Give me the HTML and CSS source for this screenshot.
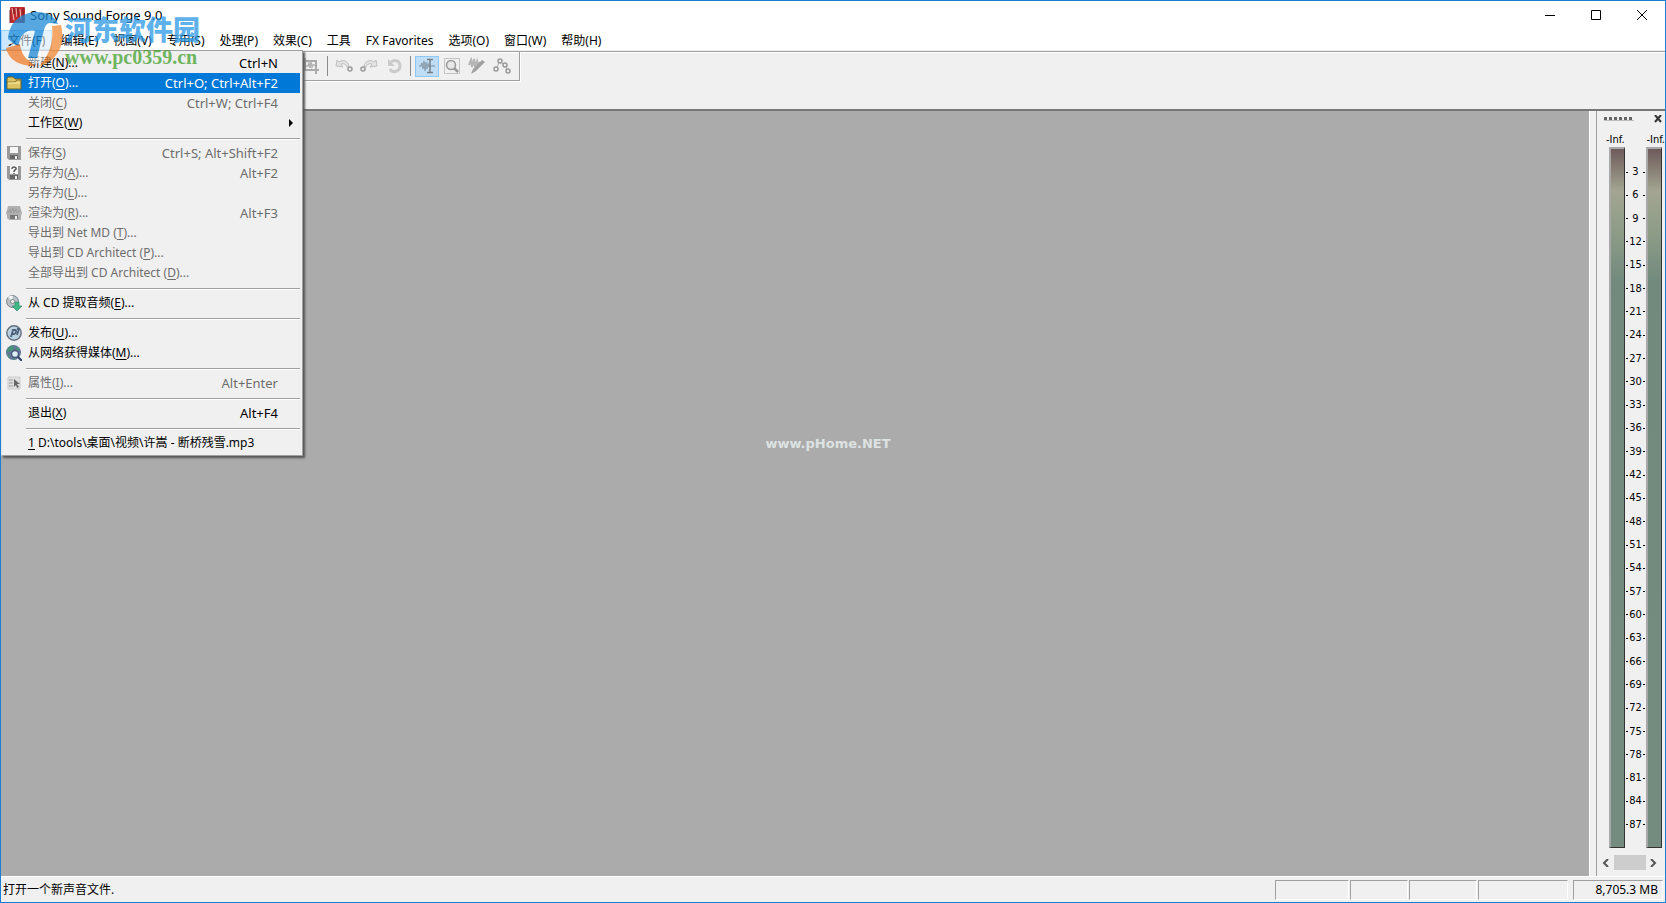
FILE: index.html
```html
<!DOCTYPE html>
<html lang="zh-CN">
<head>
<meta charset="utf-8">
<title>Sony Sound Forge 9.0</title>
<link rel="stylesheet" href="styles.css">
</head>
<body>
<div class="window">
  <header class="titlebar">
    <svg class="app-icon" viewBox="0 0 16 16" aria-hidden="true"><rect x="1" width="15" height="16" rx="1" fill="#c22d30"/><path d="M3 1l2 12M7 1l1 9M11 2l1 10" fill="none" stroke="#f0b9b4"/><path d="M1 3v13M5 1v6M9 1v9M14 1v14" stroke="#761c22"/></svg>
    <h1 class="title">Sony Sound Forge 9.0</h1>
    <div class="caption-buttons">
      <button aria-label="最小化"><svg viewBox="0 0 12 12"><path d="M1 6.500h10"/></svg></button>
      <button aria-label="最大化"><svg viewBox="0 0 12 12"><path d="M1.500 1.500h9v9h-9z"/></svg></button>
      <button aria-label="关闭"><svg viewBox="0 0 12 12"><path d="M1 1l10 10M11 1L1 11"/></svg></button>
    </div>
  </header>
  <nav class="menubar" aria-label="主菜单">
    <button class="open">文件(F)</button><button>编辑(E)</button><button>视图(V)</button><button>专用(S)</button><button>处理(P)</button><button>效果(C)</button><button>工具</button><button>FX Favorites</button><button>选项(O)</button><button>窗口(W)</button><button>帮助(H)</button>
  </nav>
  <section class="toolbars">
    <div class="toolbar">
      <button aria-label="裁剪"><svg viewBox="0 0 18 18"><path d="M0 4h14v13M3 1v12h14" fill="none" stroke="#aaa" stroke-width="2"/><path d="M4 9h2l1-3 1 5 1-6 1 5 1-2h2" fill="none" stroke="#b4b4b4" stroke-width="1.500"/></svg></button>
      <span class="divider"></span>
      <button aria-label="撤销"><svg viewBox="0 0 18 18"><path d="M1 9l1-6 2 2c4-3 9-1 10 4l-2 1c-1-3-4-4-6-3l2 3z" fill="#e2e2e2" stroke="#c0c0c0"/><circle cx="15" cy="12" r="2" fill="none" stroke="#999" stroke-width="1.500"/></svg></button>
      <button aria-label="重做"><svg viewBox="0 0 18 18"><path d="M17 9l-1-6-2 2C10 2 5 4 4 9l2 1c1-3 4-4 6-3l-2 3z" fill="#e2e2e2" stroke="#c0c0c0"/><circle cx="3" cy="12" r="2" fill="none" stroke="#999" stroke-width="1.500"/></svg></button>
      <button aria-label="重复"><svg viewBox="0 0 18 18"><path d="M6 5c4-3 9-1 9 4s-7 8-10 3" fill="none" stroke="#cacaca" stroke-width="3"/><path d="M3 2v7h7z" fill="#cacaca"/></svg></button>
      <span class="divider"></span>
      <button class="active" aria-label="编辑工具"><svg viewBox="0 0 18 18"><path d="M1 9h2l1-3 1 6 1-8 1 10 1-9 1 7 1-5 1 2h6" fill="none" stroke="#90a5b6" stroke-width="1.500"/><path d="M9 2.500h2.500L12 3l.5-.5H15M12 3v12M9 15.500h2.500L12 15l.5.5H15" fill="none" stroke="#777f87" stroke-width="1.500"/></svg></button>
      <button aria-label="放大工具"><svg viewBox="0 0 18 18"><path d="M1.500 1.500h15v15h-15z" fill="none" stroke="#999" stroke-dasharray="1 1"/><circle cx="8" cy="8" r="4.500" fill="#e8e8e8" stroke="#999" stroke-width="1.500"/><path d="M11 11l4 4" stroke="#999" stroke-width="2.500"/></svg></button>
      <button aria-label="铅笔工具"><svg viewBox="0 0 18 18"><path d="M1 8l2-5 1 7 2-8 1 8 2-6 1 4 2-3" fill="none" stroke="#b5b5b5" stroke-width="2"/><path d="M14 3l3 2-9 9-5 3 2-5z" fill="#a0a0a0"/></svg></button>
      <button aria-label="包络工具"><svg viewBox="0 0 18 18"><path d="M3 12l4-8 5 5 4 6" fill="none" stroke="#aaa"/><g fill="#eee" stroke="#999" stroke-width="1.500"><circle cx="3" cy="12" r="2"/><circle cx="7" cy="4" r="2"/><circle cx="12" cy="8" r="2"/><circle cx="15" cy="14" r="2"/></g></svg></button>
    </div>
  </section>
  <main class="content">
    <section class="workspace"><span class="site-mark">www.pHome.NET</span></section>
    <aside class="meters">
      <div class="grip-row"><span class="grip"></span><button aria-label="关闭电平表"><svg viewBox="0 0 8 8"><path d="M1 0l6 7M7 0L1 7"/></svg></button></div>
      <div class="peaks"><span>-Inf.</span><span>-Inf.</span></div>
      <div class="meter-body">
        <div class="bar"></div>
        <ol class="scale"><li>3</li><li>6</li><li>9</li><li>12</li><li>15</li><li>18</li><li>21</li><li>24</li><li>27</li><li>30</li><li>33</li><li>36</li><li>39</li><li>42</li><li>45</li><li>48</li><li>51</li><li>54</li><li>57</li><li>60</li><li>63</li><li>66</li><li>69</li><li>72</li><li>75</li><li>78</li><li>81</li><li>84</li><li>87</li></ol>
        <div class="bar"></div>
      </div>
      <div class="scroller"><button aria-label="向左"><svg viewBox="0 0 8 8"><path d="M6 0L2 4l4 4"/></svg></button><span class="thumb"></span><button aria-label="向右"><svg viewBox="0 0 8 8"><path d="M2 0l4 4-4 4"/></svg></button></div>
    </aside>
  </main>
  <footer class="statusbar"><span class="message">打开一个新声音文件.</span><span class="pane pane-a"></span><span class="pane pane-b"></span><span class="pane pane-c"></span><span class="pane pane-d"></span><span class="pane memory">8,705.3 MB</span></footer>

  <div class="file-menu" role="menu">
    <button role="menuitem"><i></i><span>新建(<u>N</u>)...</span><kbd>Ctrl+N</kbd></button>
    <button role="menuitem" class="selected"><i><svg viewBox="0 0 16 16"><path d="M1 14V4l1-2h5l2 2h6v10z" fill="#dcc465" stroke="#796625"/><path d="M1 7h8l2-2h4" fill="none" stroke="#8b752e"/><path d="M2 8h12" stroke="#fff0a4"/></svg></i><span>打开(<u>O</u>)...</span><kbd>Ctrl+O; Ctrl+Alt+F2</kbd></button>
    <button role="menuitem" disabled><i></i><span>关闭(<u>C</u>)</span><kbd>Ctrl+W; Ctrl+F4</kbd></button>
    <button role="menuitem"><i></i><span>工作区(<u>W</u>)</span><svg class="arrow" viewBox="0 0 4 8"><path d="M0 0l4 4-4 4z"/></svg></button>
    <hr>
    <button role="menuitem" disabled><i><svg viewBox="0 0 16 16"><path d="M1 1h14v14H3l-2-2z" fill="#999"/><path d="M4 2h8v6H4z" fill="#f5f5f5"/><path d="M4 10h8v4H4z" fill="#666"/><path d="M9 11h2v3H9z" fill="#eee"/></svg></i><span>保存(<u>S</u>)</span><kbd>Ctrl+S; Alt+Shift+F2</kbd></button>
    <button role="menuitem" disabled><i><svg viewBox="0 0 16 16"><path d="M1 1h14v14H3l-2-2z" fill="#999"/><path d="M4 1h8v8H4z" fill="#f5f5f5"/><path d="M6 4c0-3 5-2 4 0L8 6v1M8 8v1" fill="none" stroke="#555" stroke-width="1.500"/><path d="M4 10h8v4H4z" fill="#666"/><path d="M9 11h2v3H9z" fill="#eee"/></svg></i><span>另存为(<u>A</u>)...</span><kbd>Alt+F2</kbd></button>
    <button role="menuitem" disabled><i></i><span>另存为(<u>L</u>)...</span></button>
    <button role="menuitem" disabled><i><svg viewBox="0 0 16 16"><path d="M2 1h12l1 4 1 3-1 3v4H3l-2-2v-3L0 8l1-3z" fill="#b0b0b0"/><path d="M1 7h2l1-3 1 4 2-5 1 5 2-4 1 4 2-2h2" fill="none" stroke="#9c9c9c"/><path d="M4 10h8v4H4z" fill="#777"/><path d="M9 11h2v3H9z" fill="#eee"/></svg></i><span>渲染为(<u>R</u>)...</span><kbd>Alt+F3</kbd></button>
    <button role="menuitem" disabled><i></i><span>导出到 Net MD (<u>T</u>)...</span></button>
    <button role="menuitem" disabled><i></i><span>导出到 CD Architect (<u>P</u>)...</span></button>
    <button role="menuitem" disabled><i></i><span>全部导出到 CD Architect (<u>D</u>)...</span></button>
    <hr>
    <button role="menuitem"><i><svg viewBox="0 0 16 16"><circle cx="6.500" cy="6.500" r="6" fill="#b9c0c5" stroke="#7c848c"/><path d="M6 6L2 2a6 6 0 015-1z" fill="#f2f5f6"/><circle cx="6.500" cy="6.500" r="2" fill="#fff" stroke="#888"/><path d="M9 7h4v4h3l-5 5-5-5h3z" fill="#3fb885" stroke="#298764" stroke-width=".6"/></svg></i><span>从 CD 提取音频(<u>E</u>)...</span></button>
    <hr>
    <button role="menuitem"><i><svg viewBox="0 0 16 16"><circle cx="8" cy="8" r="7.200" fill="#bad2e1" stroke="#64707c" stroke-width="1.400"/><path d="M5 12L7 5h2c2 0 1 4-1 4H6M11 4h2l-2 6" fill="none" stroke="#4c617a" stroke-width="1.800"/></svg></i><span>发布(<u>U</u>)...</span></button>
    <button role="menuitem"><i><svg viewBox="0 0 16 16"><circle cx="7.500" cy="7.500" r="7.500" fill="#66749f"/><path d="M3 2l4-2 1 4-4 3-4-1zM10 1l4 4-3 1zM0 8l4 2v4zM6 14l4-1-1 2z" fill="#459577"/><circle cx="9" cy="9" r="3.500" fill="#dfedf7" stroke="#4b5878" stroke-width="1.500"/><path d="M12 12l4 4" stroke="#293c62" stroke-width="2"/></svg></i><span>从网络获得媒体(<u>M</u>)...</span></button>
    <hr>
    <button role="menuitem" disabled><i><svg viewBox="0 0 16 16"><path d="M2 2h12v12H2z" fill="#e0e0e0" stroke="#ccc"/><path d="M3 5h4M3 8h4M3 11h4" stroke="#999"/><path d="M8 4v8l2-2 1 3 2-1-2-3h3z" fill="#666"/></svg></i><span>属性(<u>I</u>)...</span><kbd>Alt+Enter</kbd></button>
    <hr>
    <button role="menuitem"><i></i><span>退出(<u>X</u>)</span><kbd>Alt+F4</kbd></button>
    <hr>
    <button role="menuitem"><i></i><span><u>1</u> D:\tools\桌面\视频\许嵩 - 断桥残雪.mp3</span></button>
  </div>

  <div class="watermark">
    <svg viewBox="0 0 60 60" aria-hidden="true"><circle cx="29" cy="34" r="22" fill="#fff" fill-opacity=".7"/><path d="M4 31C5 12 20 4 33 4c10 0 18 4 21 12l-8-1c-3 0-5 3-6 7l-7 28h-9l7-27c-8-2-13 3-15 9l-2 7z" fill="#1f8bd8"/><path d="M2 40l14-4c1 7 3 12 8 16l7 6C17 58 5 53 2 40z" fill="#f07c28"/><path d="M48 18l9-1c5 20-4 36-22 41 9-8 15-23 13-40z" fill="#f28a35"/></svg>
    <div class="watermark-text"><strong>河东软件园</strong><span>www.pc0359.cn</span></div>
  </div>
</div>
</body>
</html>
```
FILE: styles.css
```css
* { box-sizing: border-box; }
body { margin: 0; font: 12px/20px "Noto Sans", "Noto Sans CJK SC", sans-serif; color: #000; }
button { font: inherit; color: inherit; background: none; border: 0; margin: 0; padding: 0; }
svg { display: block; }
.window { position: relative; display: flex; flex-direction: column; height: 100vh; border: 1px solid #1a7fd4; background: #f0f0f0; overflow: hidden; }
.titlebar { display: flex; align-items: center; height: 29px; padding: 0 0 2px 8px; background: #fff; flex: none; }
.app-icon { width: 16px; height: 16px; }
.title { flex: 1; margin: 0 0 0 5px; font-size: 13px; font-weight: 400; }
.caption-buttons { display: flex; }
.caption-buttons button { width: 46px; height: 28px; display: grid; place-items: center; }
.caption-buttons svg { width: 12px; height: 12px; fill: none; stroke: #000; }
.menubar { display: flex; gap: 1px; height: 20px; background: #fff; flex: none; }
.menubar button { padding: 1px 7px 0; line-height: 19px; white-space: nowrap; }
.menubar .open { background: #cce8ff; outline: 1px solid #99d1ff; outline-offset: -1px; }
.toolbars { flex: none; height: 61px; border-bottom: 2px solid #777; background: linear-gradient(#a0a0a0, #a0a0a0) 0 1px / 100% 1px no-repeat, linear-gradient(#fff, #fff) 0 2px / 100% 1px no-repeat, #f0f0f0; }
.toolbar { display: flex; align-items: center; justify-content: flex-end; gap: 1px; width: 519px; height: 30px; margin-top: 1px; padding: 0 5px 0 0; border: 1px solid #a0a0a0; border-left: 0; box-shadow: 1px 1px #fff, inset 0 1px #fff; }
.toolbar button { width: 24px; height: 21px; display: grid; place-items: center; flex: none; }
.toolbar svg { width: 18px; height: 18px; }
.toolbar .active { background: #bfddf5; outline: 1px solid #8fc8f5; outline-offset: -1px; }
.divider { width: 1px; height: 20px; margin: 0 3px; background: #8a8a8a; }
.content { display: flex; flex: 1; min-height: 0; }
.workspace { flex: 1; display: grid; place-items: center; background: #ababab; padding-bottom: 100px; padding-left: 66px; }
.site-mark { color: #dde2e2; font: bold 13px/20px "DejaVu Sans", sans-serif; }
.meters { display: flex; flex-direction: column; width: 76px; padding-left: 8px; border-left: 1px solid #fff; background: linear-gradient(#a0a0a0, #a0a0a0) 6px 0 / 1px 100% no-repeat, #f0f0f0; font: 12px/20px "DejaVu Sans Condensed", "DejaVu Sans", sans-serif; }
.grip-row { display: flex; align-items: center; justify-content: space-between; height: 16px; padding: 0 3px 0 6px; }
.grip { width: 30px; height: 4px; background: repeating-linear-gradient(90deg, #666 0 3px, transparent 3px 5px); border-bottom: 1px solid #bbb; }
.grip-row svg { width: 8px; height: 8px; stroke: #333; stroke-width: 2; }
.peaks { display: flex; justify-content: space-between; height: 20px; line-height: 26px; padding: 0 0 0 8px; font-size: 11px; }
.meter-body { display: flex; flex: 1; min-height: 0; padding: 0 3px 0 11px; }
.bar { width: 16px; flex: none; border: 2px solid #a8a8a8; border-right: 1px solid #333; border-bottom: 1px solid #333; background: linear-gradient(#6e5a5a, #a3a592 6%, #8d9c87 12%, #728a7e 19%, #748c80); }
.scale { flex: 1; display: flex; flex-direction: column; justify-content: space-between; list-style: none; margin: 0; padding: 15px 1px 13px 1px; font-size: 11px; }
.scale li { display: flex; align-items: center; justify-content: space-between; height: 20px; }
.scale li::before, .scale li::after { content: ""; width: 2px; height: 1px; background: #000; }
.scroller { display: flex; align-items: center; height: 27px; padding: 0 4px 0 0; margin-top: 1px; }
.scroller button { flex: 1; height: 15px; display: grid; place-items: center; }
.scroller svg { width: 8px; height: 8px; fill: none; stroke: #555; stroke-width: 2; }
.thumb { width: 32px; height: 15px; background: #cdcdcd; }
.statusbar { display: flex; flex: none; height: 26px; padding: 3px 2px 2px 2px; border-top: 1px solid #fff; }
.message { flex: 1; }
.pane { border: 1px solid #fff; border-top-color: #a0a0a0; border-left-color: #a0a0a0; margin-right: 1px; }
.pane-a { width: 74px; }
.pane-b { width: 58px; }
.pane-c { width: 68px; }
.pane-d { width: 90px; margin-right: 5px; }
.memory { width: 90px; margin-right: 0; padding-right: 4px; line-height: 18px; text-align: right; }
.file-menu { position: absolute; left: 0; top: 49px; width: 302px; padding: 2px 2px 2px 2px; background: #f0f0f0; border: 1px solid #a0a0a0; border-left-color: #e3e3e3; box-shadow: 2px 2px 2px #555; }
.file-menu button { display: flex; align-items: center; width: 100%; height: 20px; padding-right: 22px; white-space: nowrap; text-align: left; }
.file-menu i { width: 24px; padding-left: 2px; flex: none; }
.file-menu i svg { width: 16px; height: 16px; }
.file-menu span { flex: 1; }
.file-menu kbd { font: inherit; font-size: 13px; }
.file-menu u { text-underline-offset: 2px; }
.file-menu button:disabled { color: #6d6d6d; }
.file-menu .selected { background: #0078d7; color: #fff; }
.file-menu .arrow { width: 4px; height: 8px; margin-right: -15px; }
.file-menu hr { height: 2px; margin: 5px 0 3px 22px; border: 0; border-top: 1px solid #a0a0a0; border-bottom: 1px solid #fff; }
.watermark { position: absolute; left: 2px; top: 7px; display: flex; opacity: .75; pointer-events: none; }
.watermark svg { width: 62px; height: 60px; }
.watermark-text { display: flex; flex-direction: column; padding-top: 6px; }
.watermark strong { color: #2997e5; font: 900 27px/30px "Noto Sans CJK SC", sans-serif; }
.watermark-text span { color: #45a22f; font: bold 20px/26px "Liberation Serif", serif; }
```
